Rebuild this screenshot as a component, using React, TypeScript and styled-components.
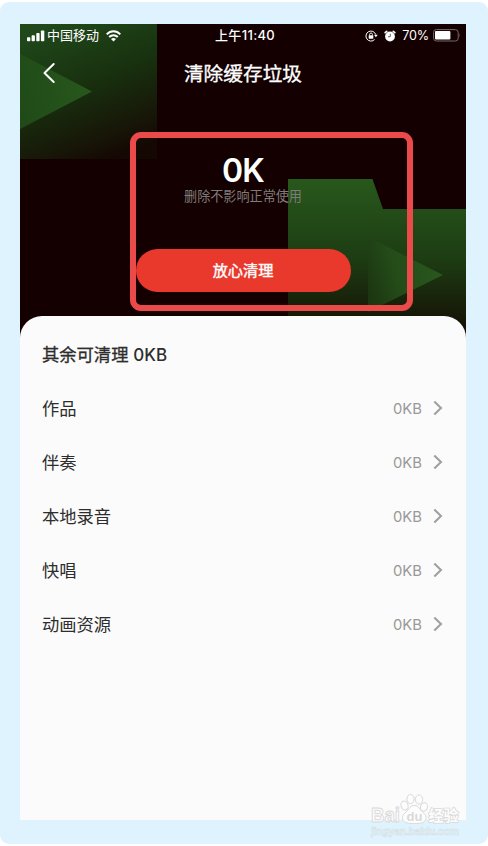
import React from "react";
import styled, { createGlobalStyle } from "styled-components";

const GlobalStyle = createGlobalStyle`
  * { box-sizing: border-box; }
  body {
    margin: 0;
    background: #fff;
    font-family: Inter, "Noto Sans CJK SC", sans-serif;
  }
`;

const Frame = styled.main`
  width: 488px;
  height: 842px;
  margin: 2px 0;
  padding: 22px 22px 24px 20px;
  border-radius: 9px;
  background: #def3fd;
  position: relative;
`;

const Phone = styled.div`
  height: 796px;
  display: flex;
  flex-direction: column;
  position: relative;
  overflow: hidden;
  background: #140000;
`;

const Backdrop = styled.svg`
  position: absolute;
  inset: 0 auto auto 0;
`;

const Hero = styled.section`
  position: relative;
  height: 292px;
  flex: none;
  display: flex;
  flex-direction: column;
  align-items: center;
  color: #fff;
`;

const StatusBar = styled.div`
  align-self: stretch;
  height: 23px;
  padding: 0 5px 0 7px;
  display: grid;
  grid-template-columns: 1fr auto 1fr;
  align-items: center;
  font-size: 13px;
  line-height: 23px;
  white-space: nowrap;
`;

const StatusGroup = styled.div<{ $end?: boolean }>`
  display: flex;
  align-items: center;
  justify-content: ${(p) => (p.$end ? "flex-end" : "flex-start")};
`;

const Carrier = styled.span`
  margin: 0 7px 0 2px;
`;

const Clock = styled.span`
  font-size: 13px;
  font-weight: 500;
  letter-spacing: 0.35px;
  margin-left: 2px;
`;

const Percent = styled.span`
  font-size: 12.6px;
  letter-spacing: -0.2px;
  margin: 0 4px 0 6px;
`;

const AlarmSlot = styled.span`
  display: flex;
  margin-left: 6px;
`;

const NavBar = styled.header`
  align-self: stretch;
  height: 52px;
  display: grid;
  grid-template-columns: 60px 1fr 60px;
  align-items: center;
`;

const BackButton = styled.button`
  border: 0;
  padding: 0 0 0 22px;
  background: none;
  display: flex;
`;

const Title = styled.h1`
  margin: 0;
  padding-top: 1px;
  font-size: 19.7px;
  line-height: 28px;
  font-weight: 400;
  text-align: center;
  -webkit-text-stroke: 0.3px currentColor;
`;

const Amount = styled.div`
  margin-top: 52px;
  font-size: 32px;
  line-height: 40px;
  font-weight: 600;
  letter-spacing: -0.8px;
`;

const Hint = styled.div`
  font-size: 13.1px;
  line-height: 20px;
  margin-top: -5px;
  color: #7f7b79;
`;

const CleanButton = styled.button`
  margin: 43px 0 0;
  padding: 0;
  width: 215px;
  height: 43px;
  border: 0;
  border-radius: 22px;
  background: #e9392c;
  color: #fff;
  font: 400 15.2px/22px Inter, "Noto Sans CJK SC", sans-serif;
  -webkit-text-stroke: 0.4px currentColor;
`;

const Sheet = styled.section`
  position: relative;
  flex: 1;
  padding: 11px 23px 0 22px;
  border-radius: 22px 22px 0 0;
  background: #fbfbfb;
  color: #2d2d2d;
`;

const SheetTitle = styled.h2`
  margin: 0;
  height: 54px;
  font-size: 17.3px;
  line-height: 55px;
  font-weight: 400;
  -webkit-text-stroke: 0.3px currentColor;
`;

const SheetSize = styled.span`
  font-size: 17px;
  font-weight: 500;
  -webkit-text-stroke: 0;
`;

const List = styled.ul`
  list-style: none;
  margin: 0;
  padding: 0;
`;

const Row = styled.li`
  height: 54px;
  display: flex;
  align-items: center;
  font-size: 17.3px;
  line-height: 26px;
`;

const Name = styled.span`
  padding-top: 1px;
`;

const Size = styled.span`
  margin-left: auto;
  margin-right: 11px;
  padding-top: 1px;
  font-size: 14.8px;
  color: #999;
`;

const Callout = styled.div`
  position: absolute;
  left: 130px;
  top: 130px;
  width: 283px;
  height: 179px;
  border: 6px solid #ea4a49;
  border-radius: 11px;
`;

const Watermark = styled.svg`
  position: absolute;
  left: 368px;
  top: 788px;
`;

const Signal = () => (
  <svg width="18" height="12" viewBox="0 0 18 12" fill="#fff">
    <rect x="0" y="7.3" width="3.3" height="4" rx="0.8" />
    <rect x="4.6" y="5.3" width="3.300" height="6" rx="0.8" />
    <rect x="9.3" y="3" width="3.3" height="8.3" rx="0.8" />
    <rect x="13.9" y="0.4" width="3.4" height="10.900" rx="0.8" />
  </svg>
);

const Wifi = () => (
  <svg width="15" height="12" viewBox="0 0 15 12" fill="none" stroke="#fff" strokeWidth="2">
    <path d="M0.7 4.4C4.5 0.2 10.5 0.2 14.300 4.400" />
    <path d="M3.200 7C5.700 4.500 9.300 4.500 11.800 7" />
    <path d="M5 8.900Q7.500 6.900 10 8.900L7.500 11.500Z" fill="#fff" stroke="none" />
  </svg>
);

const RotationLock = () => (
  <svg width="13" height="12" viewBox="0 0 13 12" fill="none" stroke="#fff">
    <path d="M10.7 4.5A5 5 0 1 0 9.6 9.5" strokeWidth="1" />
    <path d="M9 4.8H12.7L10.9 7.3Z" fill="#fff" stroke="none" />
    <rect x="3.7" y="5.2" width="4.6" height="3.5" rx="0.4" fill="#fff" stroke="none" />
    <path d="M4.6 5.4V4.4a1.4 1.4 0 0 1 2.8 0v1" strokeWidth="0.9" />
  </svg>
);

const Alarm = () => (
  <svg width="12" height="12" viewBox="0 0 12 12">
    <circle cx="6" cy="6.5" r="4.9" fill="#fff" />
    <path d="M1.200 2.700L2.700 1.300M10.800 2.700L9.300 1.300" stroke="#fff" strokeWidth="1.7" strokeLinecap="round" />
    <path d="M6.300 3.800V6.700H4" fill="none" stroke="#4a3b3b" strokeWidth="0.8" />
  </svg>
);

const Battery = () => (
  <svg width="28" height="13" viewBox="0 0 28 13">
    <rect x="0.6" y="0.6" width="24.6" height="11.4" rx="2.8" fill="none" stroke="#75696a" strokeWidth="1" />
    <rect x="2" y="2" width="15.4" height="8.6" rx="1" fill="#fff" />
    <path d="M26.3 4.3q1.5 2 0 4z" fill="#75696a" />
  </svg>
);

const Chevron = () => (
  <svg width="10" height="16" viewBox="0 0 10 16" fill="none" stroke="#a0a0a0" strokeWidth="2.1">
    <path d="M1.3 1.4L8 8L1.3 14.6" />
  </svg>
);

const items = ["作品", "伴奏", "本地录音", "快唱", "动画资源"];

export default function App() {
  return (
    <>
      <GlobalStyle />
      <Frame>
        <Phone>
          <Backdrop width="446" height="320" viewBox="0 0 446 320">
            <defs>
              <linearGradient id="corner" x1="0.25" y1="0" x2="0.65" y2="1">
                <stop offset="0" stopColor="#20481a" />
                <stop offset="0.45" stopColor="#18310f" />
                <stop offset="0.85" stopColor="#171507" />
                <stop offset="1" stopColor="#150803" />
              </linearGradient>
              <linearGradient id="folder" x1="0" y1="0" x2="0" y2="1">
                <stop offset="0" stopColor="#28581c" />
                <stop offset="0.5" stopColor="#1d3d13" />
                <stop offset="0.85" stopColor="#171b08" />
                <stop offset="1" stopColor="#150a03" />
              </linearGradient>
              <linearGradient id="cornerArrow" x1="1" y1="0.4" x2="0" y2="0.6">
                <stop offset="0" stopColor="#28581d" />
                <stop offset="1" stopColor="#204b18" />
              </linearGradient>
              <linearGradient id="folderArrow" x1="1" y1="0.4" x2="0" y2="0.7">
                <stop offset="0" stopColor="#28581d" />
                <stop offset="0.6" stopColor="#244c19" />
                <stop offset="1" stopColor="#1c3611" />
              </linearGradient>
            </defs>
            <path d="M0 0H137V135H0Z" fill="url(#corner)" />
            <path d="M0 30L72 67.5L0 105Z" fill="url(#cornerArrow)" />
            <path d="M268 155H352.5L363 185H446V312H268Z" fill="url(#folder)" />
            <path d="M348 213L423 251L348 288Z" fill="url(#folderArrow)" />
          </Backdrop>
          <Hero>
            <StatusBar>
              <StatusGroup>
                <Signal />
                <Carrier>中国移动</Carrier>
                <Wifi />
              </StatusGroup>
              <Clock>上午11:40</Clock>
              <StatusGroup $end>
                <RotationLock />
                <AlarmSlot><Alarm /></AlarmSlot>
                <Percent>70%</Percent>
                <Battery />
              </StatusGroup>
            </StatusBar>
            <NavBar>
              <BackButton aria-label="返回">
                <svg width="14" height="22" viewBox="0 0 14 22" fill="none" stroke="#fff" strokeWidth="2" strokeLinecap="round" strokeLinejoin="round">
                  <path d="M11.7 2L2.5 11L11.7 20" />
                </svg>
              </BackButton>
              <Title>清除缓存垃圾</Title>
            </NavBar>
            <Amount>0K</Amount>
            <Hint>删除不影响正常使用</Hint>
            <CleanButton>放心清理</CleanButton>
          </Hero>
          <Sheet>
            <SheetTitle>其余可清理 <SheetSize>0KB</SheetSize></SheetTitle>
            <List>
              {items.map((name) => (
                <Row key={name}>
                  <Name>{name}</Name>
                  <Size>0KB</Size>
                  <Chevron />
                </Row>
              ))}
            </List>
          </Sheet>
        </Phone>
        <Callout />
        <Watermark width="96" height="52" viewBox="0 0 96 52" fill="#fdfdfd" stroke="#d9d9d9" strokeWidth="1">
          <text x="3" y="32" fontFamily="Liberation Sans" fontWeight="700" fontSize="21" textLength="29" lengthAdjust="spacingAndGlyphs">Bai</text>
          <ellipse cx="36.500" cy="15.500" rx="3.500" ry="4.500" transform="rotate(-20 36.500 15.500)" />
          <ellipse cx="42.500" cy="9" rx="3.600" ry="4.600" />
          <ellipse cx="51" cy="9.500" rx="3.600" ry="4.600" />
          <ellipse cx="56" cy="17" rx="3.400" ry="4.300" transform="rotate(15 56 17)" />
          <path d="M46.500 15.500c4.500 0 5 4 8 6.500s4.500 5 3 8-4.500 3.500-11 3.500-10-.5-11.500-3.500 0-5.500 3-8 4-6.500 8.500-6.500Z" />
          <text x="38.500" y="30.500" fontFamily="Liberation Sans" fontWeight="700" fontSize="13" fill="#d9d9d9" stroke="none">du</text>
          <text x="60.500" y="31" fontFamily="Noto Sans CJK SC" fontWeight="700" fontSize="15" strokeWidth="1.6" paintOrder="stroke">经验</text>
          <text x="3" y="45" fontFamily="Liberation Sans" fontWeight="700" fontSize="10.500" textLength="88" strokeWidth="0.6" stroke="#d3dfe5" fill="#e9f5fb">jingyan.baidu.com</text>
        </Watermark>
      </Frame>
    </>
  );
}
